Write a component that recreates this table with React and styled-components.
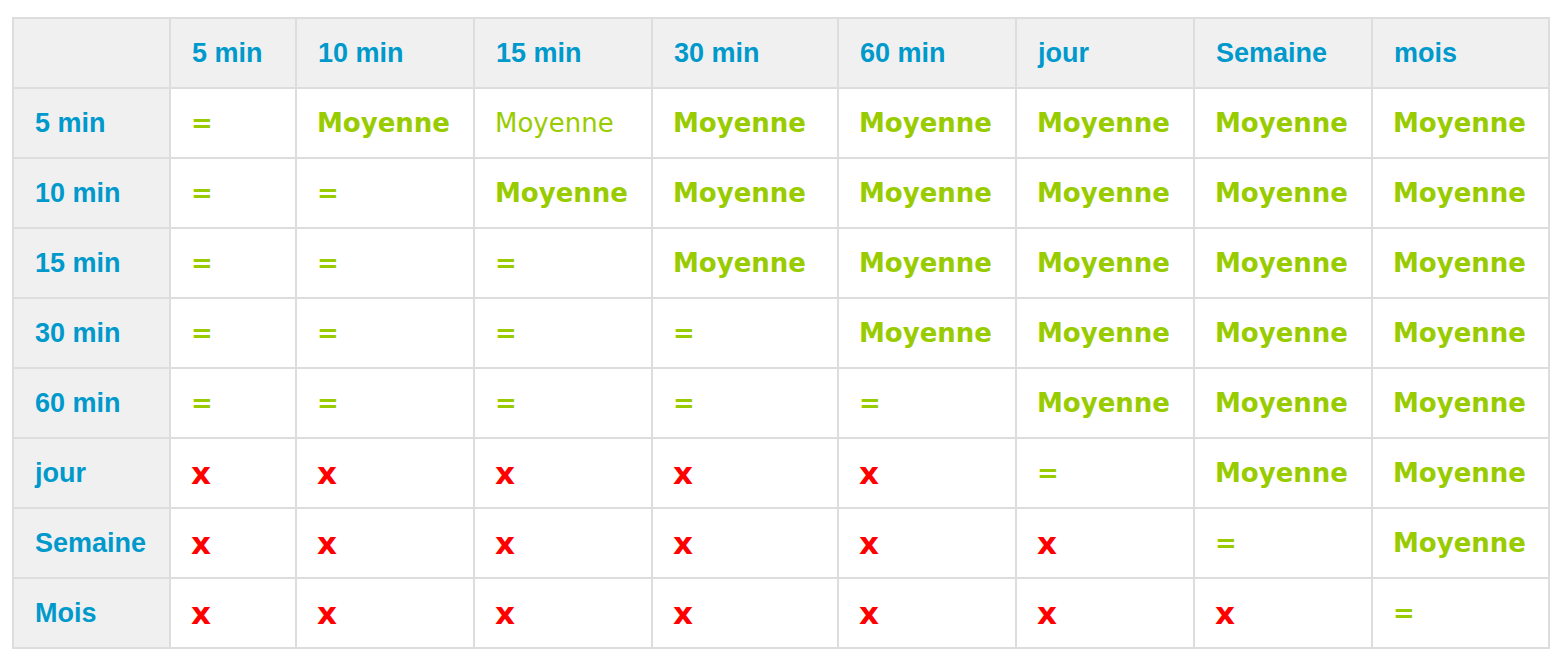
import React from 'react';
import styled, { createGlobalStyle } from 'styled-components';

const GlobalStyle = createGlobalStyle`
  body {
    margin: 0;
    background: #ffffff;
    font-family: "Liberation Sans", Arial, sans-serif;
  }
`;

const Page = styled.div`
  padding: 17px 0 0 12px;
`;

const Grid = styled.div`
  display: grid;
  grid-template-columns: 155px 124px 176px 176px 184px 176px 176px 176px 175px;
  grid-auto-rows: 68px;
  gap: 2px;
  padding: 2px;
  width: max-content;
  background: #dddddd;
`;

const Cell = styled.div`
  display: flex;
  align-items: center;
  padding-left: 21px;
  background: ${({ $head }) => ($head ? '#f0f0f0' : '#ffffff')};
  font-size: 27px;
  font-weight: 700;
  color: #0099cc;
`;

const Value = styled.span`
  font-family: "DejaVu Sans", Verdana, sans-serif;
  font-size: ${({ $kind }) => ($kind === 'x' ? '31px' : '26px')};
  margin-left: -1px;
  color: ${({ $kind }) => ($kind === 'x' ? '#ff0000' : '#99cc00')};
  font-weight: ${({ $light }) => ($light ? 400 : 700)};
`;

const labels = ['5 min', '10 min', '15 min', '30 min', '60 min', 'jour', 'Semaine', 'mois'];
const rowLabels = ['5 min', '10 min', '15 min', '30 min', '60 min', 'jour', 'Semaine', 'Mois'];

const cellFor = (r, c) => {
  if (c === r) return { kind: 'eq', text: '=' };
  if (c > r) return { kind: 'avg', text: 'Moyenne', light: r === 0 && c === 2 };
  if (r >= 5) return { kind: 'x', text: 'x' };
  return { kind: 'eq', text: '=' };
};

const App = () => {
  return (
    <Page>
      <GlobalStyle />
      <Grid>
        <Cell $head />
        {labels.map((l) => (
          <Cell $head key={l}>{l}</Cell>
        ))}
        {rowLabels.map((rl, r) => (
          <React.Fragment key={rl}>
            <Cell $head>{rl}</Cell>
            {labels.map((_, c) => {
              const v = cellFor(r, c);
              return (
                <Cell key={c}>
                  <Value $kind={v.kind} $light={v.light}>{v.text}</Value>
                </Cell>
              );
            })}
          </React.Fragment>
        ))}
      </Grid>
    </Page>
  );
};

export default App;
